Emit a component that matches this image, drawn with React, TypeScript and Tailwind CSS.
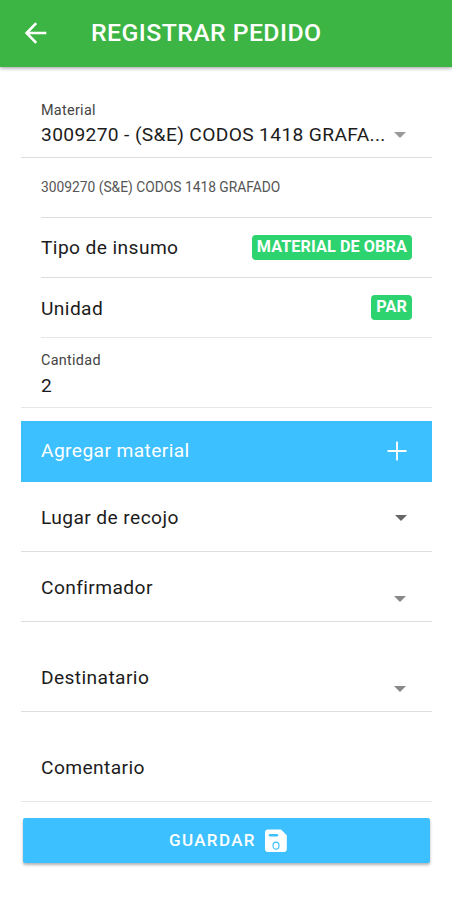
import type { ReactNode } from "react";

function Caret({ className }: { className: string }) {
  return (
    <svg viewBox="0 0 12 6" className={`h-[6px] w-[12px] shrink-0 ${className}`} fill="currentColor">
      <path d="M0 0h12L6 6z" />
    </svg>
  );
}

function Badge({ children }: { children: ReactNode }) {
  return (
    <span className="flex h-[25px] items-start rounded-[4px] bg-[#2dd36f] pt-[1px] pr-[5px] pl-[5px] text-[16.2px] leading-[21px] font-bold tracking-[0.1px] text-white">
      {children}
    </span>
  );
}

export default function App() {
  return (
    <div className="h-[900px] w-[452px] overflow-hidden bg-white font-['Roboto',sans-serif] text-[#1c1c1c]">
      <header className="flex h-[67px] items-center bg-[#3cb544] pl-[24px] text-white shadow-[0_1px_4px_rgba(0,0,0,0.4)]">
        <svg viewBox="0 0 24 24" className="mt-[-2px] h-[24px] w-[24px]" fill="none" stroke="currentColor" strokeWidth="2.6">
          <path d="M22.3 12H3M12.2 2.2 2.6 12l9.6 9.8" />
        </svg>
        <h1 className="ml-[43px] pb-[2px] text-[24.8px] leading-[30px] font-medium tracking-[0.42px]">REGISTRAR PEDIDO</h1>
      </header>

      <main className="flex flex-col pr-[20px] pl-[21px] text-[19.2px] tracking-[0.4px]">
        <div className="h-[91px] border-b border-[#dedede] pt-[34px] pl-[20px]">
          <div className="pt-px text-[14.4px] leading-[18px] tracking-[0.3px] text-[#444]">Material</div>
          <div className="flex items-center pt-[2px] leading-[26px]">
            <span className="w-[353px] whitespace-nowrap tracking-[0.36px]">3009270 - (S&amp;E) CODOS 1418 GRAFA...</span>
            <Caret className="text-[#999]" />
          </div>
        </div>
        <div className="ml-[20px] flex h-[60px] items-center border-b border-[#dedede] text-[13.8px] tracking-normal text-[#555]">
          <span>3009270 (S&amp;E) CODOS 1418 GRAFADO</span>
        </div>
        <div className="ml-[20px] flex h-[60px] items-center justify-between border-b border-[#dedede] pr-[20px]">
          <span className="pt-[2px]">Tipo de insumo</span>
          <Badge>MATERIAL DE OBRA</Badge>
        </div>
        <div className="ml-[20px] flex h-[60px] items-center justify-between border-b border-[#e6e6e6] pr-[20px]">
          <span className="pt-[3px]">Unidad</span>
          <Badge>PAR</Badge>
        </div>
        <div className="h-[70px] border-b border-[#e6e6e6] pt-[14px] pl-[20px]">
          <div className="text-[14.4px] leading-[18px] tracking-[0.3px] text-[#444]">Cantidad</div>
          <div className="pt-[3px] leading-[26px]">2</div>
        </div>
        <button className="mt-[13px] flex h-[61px] items-center justify-between bg-[#3dc0ff] pr-[25px] pl-[20px] tracking-[0.4px] text-white">
          <span>Agregar material</span>
          <svg viewBox="0 0 20 20" className="mt-[-2px] h-[20px] w-[20px]" fill="none" stroke="currentColor" strokeWidth="1.8">
            <path d="M10 0.5v19M0.5 10h19" />
          </svg>
        </button>
        <div className="flex h-[70px] items-center justify-between border-b border-[#dedede] pr-[25px] pl-[20px]">
          <span className="pt-[3px]">Lugar de recojo</span>
          <Caret className="mt-[2px] text-[#666]" />
        </div>
        <div className="flex h-[70px] items-center justify-between border-b border-[#dedede] pr-[26px] pl-[20px]">
          <span className="pt-[3px]">Confirmador</span>
          <Caret className="mt-[25px] text-[#888]" />
        </div>
        <div className="flex h-[90px] items-center justify-between border-b border-[#dedede] pt-[22px] pr-[26px] pl-[20px]">
          <span className="pt-[2px]">Destinatario</span>
          <Caret className="mt-[23px] text-[#888]" />
        </div>
        <div className="flex h-[90px] items-center border-b border-[#e6e6e6] pt-[23px] pl-[20px]">
          <span>Comentario</span>
        </div>
        <button className="mt-[16px] mr-[2px] ml-[2px] flex h-[45px] items-center rounded-[2px] bg-[#3dc0ff] pl-[146px] text-[17px] font-medium tracking-[1.35px] text-white shadow-[0_2px_3px_rgba(0,0,0,0.3)]">
          <span className="w-[96px] text-left whitespace-nowrap">GUARDAR</span>
          <svg viewBox="0 0 22 23" className="mt-[-1px] h-[23px] w-[22px]">
            <path d="M3 0.5H16L21.8 6.2V20a3 3 0 0 1-3 3H3a3 3 0 0 1-3-3V3.5a3 3 0 0 1 3-3Z" fill="#fff" />
            <path d="M5 6.3h7" stroke="#3dc0ff" strokeWidth="2.4" strokeLinecap="round" />
            <ellipse cx="11" cy="16.7" rx="3" ry="3.5" fill="none" stroke="#3dc0ff" strokeWidth="1.2" />
          </svg>
        </button>
      </main>
    </div>
  );
}
